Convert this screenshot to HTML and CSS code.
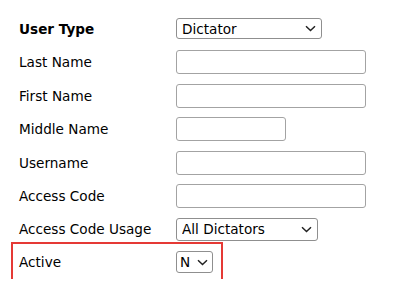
FILE: index.html
```html
<!DOCTYPE html>
<html>
<head>
<meta charset="utf-8">
<link rel="stylesheet" href="styles.css">
</head>
<body>
<form class="form">
  <div class="row r-type">
    <label class="lbl bold">User Type</label>
    <select class="sel sel-type"><option>Dictator</option></select>
  </div>
  <div class="row">
    <label class="lbl">Last Name</label>
    <input class="inp" type="text">
  </div>
  <div class="row">
    <label class="lbl">First Name</label>
    <input class="inp" type="text">
  </div>
  <div class="row">
    <label class="lbl">Middle Name</label>
    <input class="inp inp-short" type="text">
  </div>
  <div class="row">
    <label class="lbl">Username</label>
    <input class="inp" type="text">
  </div>
  <div class="row">
    <label class="lbl">Access Code</label>
    <input class="inp" type="text">
  </div>
  <div class="row r-usage">
    <label class="lbl">Access Code Usage</label>
    <select class="sel sel-usage"><option>All Dictators</option></select>
  </div>
  <div class="row r-active">
    <label class="lbl">Active</label>
    <select class="sel sel-active"><option>N</option></select>
  </div>
</form>
</body>
</html>
```

FILE: styles.css
```css
html, body {
  margin: 0;
  padding: 0;
  background: #ffffff;
}
body {
  font-family: "DejaVu Sans", Verdana, sans-serif;
  font-size: 13.6px;
  color: #000000;
}
.form {
  padding-top: 12px;
  display: flex;
  flex-direction: column;
}
.row {
  display: flex;
  align-items: center;
  height: 33.5px;
  margin-left: 14px;
  padding-left: 5px;
  box-sizing: border-box;
}
.r-usage {
  height: 32px;
}
.r-active {
  height: 34px;
  width: fit-content;
  padding-right: 7px;
  outline: 2px solid #e53935;
  outline-offset: 1px;
}
.lbl {
  width: 157px;
  flex: none;
}
.bold {
  font-weight: bold;
}
.inp {
  box-sizing: border-box;
  width: 190px;
  height: 24px;
  border: 1px solid #a3a3a3;
  border-radius: 3px;
  padding: 0 4px;
  font: inherit;
  margin: 0;
}
.inp-short {
  width: 110px;
}
.sel {
  -webkit-appearance: none;
  appearance: none;
  box-sizing: border-box;
  height: 22px;
  font: inherit;
  margin: 0;
  padding: 0 20px 0 5px;
  border: 1px solid #8f8f8f;
  border-radius: 3px;
  color: #000000;
  background-color: #ffffff;
  background-image: url("data:image/svg+xml;utf8,<svg xmlns='http://www.w3.org/2000/svg' width='11' height='7' viewBox='0 0 11 7'><path d='M1 1.2 L5.5 5.5 L10 1.2' fill='none' stroke='%23222' stroke-width='1.5'/></svg>");
  background-repeat: no-repeat;
  background-position: right 5px center;
  background-size: 11px 7px;
}
.sel-type {
  width: 146px;
  height: 21px;
}
.sel-usage {
  width: 142px;
  height: 23px;
}
.sel-active {
  width: 37px;
  padding: 0 0 0 3px;
  background-position: right 4px center;
}
```
